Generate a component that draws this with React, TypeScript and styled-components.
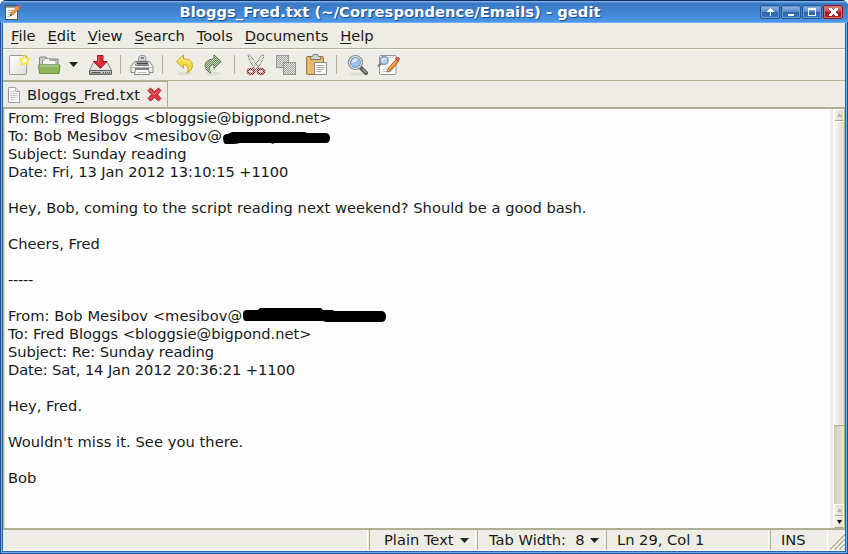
import React from "react";
import styled, { createGlobalStyle } from "styled-components";

const Global = createGlobalStyle`
  body { margin: 0; background: #fff; overflow: hidden; }
  * { box-sizing: border-box; }
`;

const Window = styled.div`
  width: 848px;
  height: 554px;
  display: flex;
  flex-direction: column;
  overflow: hidden;
  border-radius: 6px 6px 0 0;
  background: #1c4f93;
  font: 14.667px/18px "DejaVu Sans", sans-serif;
  color: #1a1a1a;
  white-space: pre;
`;

const TitleBar = styled.header`
  height: 23px;
  flex: none;
  display: flex;
  align-items: center;
  padding: 0 5px 0 4px;
  border-top: 1px solid #12305c;
  border-bottom: 1px solid #2a5ea4;
  background: linear-gradient(#77aeea 0 1px, #3a78c4 2px, #3f82d0 10px, #4b96e6 20px);
`;

const Title = styled.h1`
  flex: 1;
  margin: 0;
  padding-right: 2px;
  text-align: center;
  font-size: 14.667px;
  line-height: 20px;
  letter-spacing: 0.06px;
  color: #fff;
  text-shadow: 1px 1px 1px #1d4780;
`;

const WindowButtons = styled.div`
  display: flex;
  gap: 1px;
`;

const WindowButton = styled.button<{ $close?: boolean }>`
  width: 20px;
  height: 14px;
  padding: 0;
  display: flex;
  justify-content: center;
  align-items: center;
  border: 1px solid ${(p) => (p.$close ? "#8c1a1e" : "#245592")};
  border-radius: 2px;
  background: ${(p) =>
    p.$close
      ? "linear-gradient(#cf8588, #bd5054 45%, #a3191e 50%, #b02529)"
      : "linear-gradient(#8fb4df, #5f90cc 45%, #2d65ab 50%, #3a75bd)"};
  box-shadow: inset 0 0 0 1px ${(p) => (p.$close ? "#cc7074" : "#6b9bd5")};
  svg { flex: none; }
`;

const Frame = styled.div`
  flex: 1;
  min-height: 0;
  display: flex;
  flex-direction: column;
  background: #eeede5;
  border: solid #2566b3;
  border-width: 0 1px 1px;
  margin: 0 2px 2px;
  box-shadow: 0 0 0 1px #6eb0fa;
`;

const MenuBar = styled.nav`
  height: 26px;
  flex: none;
  display: flex;
  gap: 11.9px;
  padding: 4px 8px 0;
  border-bottom: 1px solid #b0af93;
`;

const MenuItem = styled.span`
  line-height: 18px;
`;

const Mnemonic = styled.span`
  text-decoration: underline;
  text-decoration-thickness: 1px;
  text-underline-offset: 2px;
`;

const ToolBar = styled.div`
  height: 32px;
  flex: none;
  display: flex;
  align-items: center;
  padding: 0 0 1px 4px;
  border-top: 1px solid #fff;
  border-bottom: 1px solid #b0af93;
`;

const Tool = styled.button<{ $gap?: number }>`
  width: 24px;
  height: 24px;
  padding: 0;
  border: 0;
  background: none;
  margin-left: ${(p) => p.$gap ?? 0}px;
  svg { display: block; }
`;

const Separator = styled.i<{ $gap: number }>`
  width: 1px;
  height: 19px;
  margin-left: ${(p) => p.$gap}px;
  background: #b0af93;
`;

const TabStrip = styled.div`
  height: 28px;
  flex: none;
  display: flex;
  border-bottom: 2px solid #b0af93;
`;

const Tab = styled.div`
  width: 165px;
  display: flex;
  align-items: center;
  padding: 0 5px 0 4px;
  border: solid #b0af93;
  border-width: 1px 1px 0 0;
  svg { flex: none; }
`;

const TabLabel = styled.span`
  flex: 1;
  padding-left: 5px;
`;

const Editor = styled.main`
  flex: 1;
  min-height: 0;
  display: flex;
  border: solid #b0af93;
  border-width: 0 1px 2px 1px;
`;

const TextArea = styled.div`
  flex: 1;
  background: #fdfdfd;
  border-left: 1px solid #e4e2d2;
  padding-left: 3px;
`;

const Line = styled.div<{ $tracking: number }>`
  height: 18px;
  display: flex;
  letter-spacing: ${(p) => p.$tracking}px;
`;

const Redaction = styled.svg`
  display: block;
  flex: none;
  overflow: visible;
`;

const ScrollBar = styled.div`
  width: 14px;
  display: flex;
  flex-direction: column;
  padding-left: 4px;
  background: linear-gradient(90deg, #eeede5 0 3px, #fff 3px 4px, #d0cdbf 4px, #e6e4db);
`;

const Stepper = styled.div`
  height: 12px;
  flex: none;
  display: flex;
  align-items: center;
  justify-content: center;
  border: 1px solid #fff;
  border-bottom-color: #b0a890;
  background: linear-gradient(90deg, #f2f0e9, #dedbd0);
`;

const Thumb = styled.div`
  height: 305px;
  border-top: 1px solid #fff;
  border-bottom: 1px solid #b0a890;
  background: linear-gradient(90deg, #fafaf7, #dddacd);
`;

const Trough = styled.div`
  flex: 1;
`;

const StatusBar = styled.footer`
  height: 21px;
  flex: none;
  display: flex;
  border-bottom: 1px solid #fff;
`;

const StatusCell = styled.div<{ $width: number; $pad: number }>`
  width: ${(p) => p.$width}px;
  flex: none;
  display: flex;
  align-items: center;
  padding-left: ${(p) => p.$pad}px;
  border-left: 1px solid #b0af93;
  border-right: 1px solid #fff;
  margin-right: 1px;
`;

const StatusFill = styled.div`
  width: 365px;
  flex: none;
  border-right: 1px solid #fff;
  margin-right: 1px;
`;

const Down = ({ gap = 0 }: { gap?: number }) => (
  <svg width={9 + gap} height="5" viewBox={`${-gap} 0 ${9 + gap} 5`}>
    <path d="M0 0H9L4.5 5Z" fill="#222" />
  </svg>
);

const Pencil = () => (
  <g>
    <path d="M11 19l2-4.500 7-8 2.500 2-7 8.500z" fill="#f28c28" stroke="#8b4a12" strokeWidth=".8" />
    <path d="M13.500 15.500L20 8" stroke="#ffc477" />
    <path d="M11 19l1-3.500 2.300 2z" fill="#f6dfb4" stroke="#5a4330" strokeWidth=".5" />
    <path d="M19.500 6l1.200-1.500q1.500-.7 2.800 1l-1 2.200z" fill="#ef5960" stroke="#c8343b" strokeWidth=".8" />
  </g>
);

const DocIcon = () => (
  <g>
    <path d="M1.500.5h7l4 4v11h-11z" fill="#fafafa" stroke="#9c9e98" />
    <path d="M8.500.5v4h4" fill="#e1e1df" stroke="#b2b3ae" />
    <path d="M3.500 4.500h4M3.500 6.500h7M3.500 8.500h7M3.500 10.500h7M3.500 12.500h5" stroke="#c8c9c5" />
  </g>
);

const AppIcon = () => (
  <svg width="18" height="18" viewBox="0 0 18 18">
    <rect x="1.500" y="3" width="12" height="13.500" fill="#fafafa" stroke="#555" />
    <path d="M3 2v3M5 2v3M7 2v3M9 2v3M11 2v3" stroke="#4d4d4d" />
    <path d="M3.500 7.500h7M3.500 9.500h6M3.500 11.500h4M3.500 13.500h3" stroke="#bbb" />
    <path d="M6 13l1.500-4 6.500-6 2 2-6.500 6.500z" fill="#f6943a" stroke="#a05c20" strokeWidth=".5" />
    <path d="M13.500 2.500l2-1 1.500 1.200-1 2z" fill="#ec5360" />
    <path d="M6 13l.7-2 1.300 1.200z" fill="#222" />
  </svg>
);

const icons: Record<string, React.ReactNode> = {
  new: (
    <>
      <defs>
        <linearGradient id="paper" x2="1" y2="1"><stop stopColor="#fff" /><stop offset="1" stopColor="#deded9" /></linearGradient>
      </defs>
      <rect x="2.500" y="2.500" width="17" height="19" rx="1" fill="url(#paper)" stroke="#979994" />
      <path d="M17.500 2l1.500 3.300 3.500.5-2.500 2.500.5 3.500-3-1.700-3.200 1.700.7-3.500L12.500 6l3.500-.7z" fill="#fffdee" stroke="#f3e13a" strokeWidth="1.500" strokeLinejoin="round" />
    </>
  ),
  open: (
    <>
      <path d="M2.500 17V5q0-1 1-1H9l1.500 2h10.500v11z" fill="#c9cac5" stroke="#82857d" />
      <path d="M5.500 12V8l2.500-2.500h4l1 2h6V12z" fill="#fafafa" stroke="#999b94" />
      <path d="M1.500 12h21.500l-1 8.500H2.500z" fill="#8db65a" stroke="#668f3f" />
      <path d="M2.500 13h19.500" stroke="#c4dda5" />
    </>
  ),
  save: (
    <>
      <path d="M5.500 9.500h14l4 8v4H1.500v-4z" fill="#e6e7e4" stroke="#858783" />
      <path d="M1.500 17.500h22v3.500h-22z" fill="#c3c5c1" stroke="#5b5d59" />
      <path d="M3.500 19.500h9M15 19.500h1M17 19.500h1M19 19.500h1M21 19.500h1" stroke="#555" />
      <path d="M9.500 2.500H15V8.500h4L12.300 15.500 5.500 8.500h4z" fill="#dc2a30" stroke="#9b181d" />
      <path d="M10.500 3.500v6" stroke="#ee6569" />
    </>
  ),
  print: (
    <>
      <path d="M8.500 8V5l1.500-2.500h4.500L16 5v3z" fill="#d8d9d6" stroke="#999b97" />
      <path d="M10.500 5h3.500" stroke="#6b6d69" strokeWidth="1.500" />
      <path d="M4.500 8.500h15l3.500 5v6H1v-6z" fill="#f0f0ee" stroke="#8b8d88" />
      <path d="M6.500 8.500h11l1 4h-13z" fill="#e1e3e2" stroke="#777b7d" />
      <path d="M7 10.500h10.500" stroke="#3e4854" strokeWidth="2.200" />
      <path d="M2 14.500h20" stroke="#b5b7b3" />
      <path d="M5 16h14" stroke="#4d504d" strokeWidth="1.500" />
      <path d="M5.500 16.500h13l1 5h-15z" fill="#fafafa" stroke="#858782" />
      <path d="M7.500 19.500h9" stroke="#bbb" />
    </>
  ),
  undo: (
    <>
      <ellipse cx="12" cy="20.500" rx="8" ry="1.800" fill="#deddd3" />
      <path d="M3.500 8.500l7-6.500v4q9-.5 9 7 0 4-5.500 7 2-4 .5-6.500-1-2-4-2v3.800z" fill="#f7dd45" stroke="#c9a818" strokeLinejoin="round" />
      <path d="M5 8.500l4.500-4v2.700q6 0 8 3" fill="none" stroke="#fff2a2" />
    </>
  ),
  redo: (
    <>
      <ellipse cx="12" cy="20.500" rx="8" ry="1.800" fill="#deddd3" />
      <path d="M20 8.500l-7-6.500v4q-9 .5-9 7 0 4 5.500 7-2-4-.5-6.500 1-2 4-2v3.800z" fill="#658a4e" stroke="#486340" />
      <path d="M20 8.500l-7-6.500v4q-9 .5-9 7 0 4 5.500 7-2-4-.5-6.500 1-2 4-2v3.800z" fill="url(#mesh)" />
    </>
  ),
  cut: (
    <>
      <path d="M4 2l2 0 9 13-2.500 2Q5 9 4 2zM20 2l-2 0-9 13 2.500 2Q19 9 20 2z" fill="#dededc" stroke="#6c6e6b" />
      <ellipse cx="7" cy="18.500" rx="3.300" ry="2.600" fill="none" stroke="#8e1927" strokeWidth="2.500" />
      <ellipse cx="17" cy="18.500" rx="3.300" ry="2.600" fill="none" stroke="#8e1927" strokeWidth="2.500" />
      <path d="M2 1h20v22H2z" fill="url(#mesh)" />
    </>
  ),
  copy: (
    <>
      <rect x="2.500" y="2.500" width="12" height="12" fill="#e8e8e5" stroke="#a0a19d" />
      <rect x="9.500" y="9.500" width="12" height="12" fill="#e8e8e5" stroke="#989995" />
      <path d="M2 2h13v7h7v13H9v-7H2z" fill="url(#meshGrey)" />
    </>
  ),
  paste: (
    <>
      <rect x="2.500" y="3.500" width="17" height="18" rx="1" fill="#ddab5e" stroke="#a9762f" />
      <rect x="4.500" y="5.500" width="13" height="14" fill="#e4b971" stroke="#e9c486" />
      <path d="M6.500 6.500v-3h2l1-2h4l1 2h2v3z" fill="#d3d5d0" stroke="#747670" />
      <path d="M10.500 9.500h12v12h-12z" fill="#fafafa" stroke="#898b85" />
      <path d="M12.500 12.500h8M12.500 14.500h8M12.500 16.500h7M12.500 18.500h5" stroke="#a7a9a5" />
    </>
  ),
  find: (
    <>
      <ellipse cx="12" cy="21" rx="9" ry="1.500" fill="#deddd5" />
      <path d="M14.500 14.500l5.500 5.500" stroke="#555854" strokeWidth="4" strokeLinecap="round" />
      <path d="M16.500 16l3.500 3.700" stroke="#a5a7a3" strokeWidth="1.500" />
      <circle cx="9.500" cy="9.500" r="6.500" fill="#91b8e8" stroke="#858886" strokeWidth="2.200" />
      <circle cx="9.500" cy="9.500" r="5.800" fill="#9dc1ef" stroke="#f2f3f2" strokeWidth="1.200" />
      <circle cx="9.500" cy="9.500" r="5" fill="none" stroke="#567fbd" strokeWidth=".8" />
      <path d="M5.500 10q1-5.500 6.500-4.500-1 3.500-6.500 4.500z" fill="#dceafa" />
    </>
  ),
  replace: (
    <>
      <rect x="3.500" y="2.500" width="16.500" height="19" rx="1" fill="#fafafa" stroke="#92948f" />
      <path d="M5.500 4.500h12M6.500 16.500h4M6.500 18.500h10" stroke="#ccc" />
      <path d="M5.500 10L2 13.500" stroke="#777a77" strokeWidth="2.200" />
      <circle cx="8" cy="7.500" r="4" fill="#b9d3f1" stroke="#7f93a5" strokeWidth="1.400" />
      <path d="M5.500 7.500q1-3 4-2.500-.5 2.500-4 2.500z" fill="#e8f1fa" />
      <Pencil />
    </>
  ),
};

const Glyph = ({ name }: { name: string }) => (
  <svg width="24" height="24" viewBox="0 0 24 24">
    <defs>
      <pattern id="mesh" width="2" height="2" patternUnits="userSpaceOnUse">
        <path d="M0 0h1v1H0zM1 1h1v1H1z" fill="#eeede5" opacity=".75" shapeRendering="crispEdges" />
      </pattern>
      <pattern id="meshGrey" width="2" height="2" patternUnits="userSpaceOnUse">
        <path d="M0 0h1v1H0zM1 1h1v1H1z" fill="#8f908c" opacity=".8" shapeRendering="crispEdges" />
      </pattern>
    </defs>
    {icons[name]}
  </svg>
);

const menus = ["File", "Edit", "View", "Search", "Tools", "Documents", "Help"];

const windowGlyphs = [
  "M5 1h1v1h1v1h1v1h1v1H6v4H5V5H2V4h1V3h1V2h1z",
  "M2 7h6v2H2z",
  "M1 1h8v8H1zM2 3v5h6V3z",
  "M1 1h3v1h1v1h1V2h1V1h3v2H9v1H8v2h1v1h1v2H7V8H6V7H5v1H4v1H1V7h1V6h1V4H2V3H1z",
];

const firstMark = "M1 11q0-4 5-4l4-2h73l2 1h18q5 0 5 5t-4 5H52l-1 1-2-1H18q-3 1-7 1H3q-2-2-2-6z";
const secondMark = "M1 7q0-4 4-4h11l2-2h61l2 2h10l1 1h47q5 0 5 5.500t-5 5.500H84l-3-1H4q-3 0-3-5z";

type TextLine = { text: string; tracking?: number; mark?: string };

const lines: TextLine[] = [
  { text: "From: Fred Bloggs <bloggsie@bigpond.net>", tracking: -0.04 },
  { text: "To: Bob Mesibov <mesibov@", tracking: 0.08, mark: firstMark },
  { text: "Subject: Sunday reading", tracking: -0.05 },
  { text: "Date: Fri, 13 Jan 2012 13:10:15 +1100", tracking: -0.1 },
  { text: "" },
  { text: "Hey, Bob, coming to the script reading next weekend? Should be a good bash.", tracking: 0.035 },
  { text: "" },
  { text: "Cheers, Fred" },
  { text: "" },
  { text: "-----", tracking: -0.28 },
  { text: "" },
  { text: "From: Bob Mesibov <mesibov@", tracking: 0.05, mark: secondMark },
  { text: "To: Fred Bloggs <bloggsie@bigpond.net>", tracking: -0.02 },
  { text: "Subject: Re: Sunday reading", tracking: -0.06 },
  { text: "Date: Sat, 14 Jan 2012 20:36:21 +1100", tracking: -0.1 },
  { text: "" },
  { text: "Hey, Fred." },
  { text: "" },
  { text: "Wouldn't miss it. See you there.", tracking: 0.06 },
  { text: "" },
  { text: "Bob" },
];

const StepArrow = ({ down, dark }: { down?: boolean; dark?: boolean }) => (
  <svg width="5" height="4" viewBox="0 0 5 4">
    <path d={down ? "M0 0h5L2.500 4z" : "M0 4h5L2.500 0z"} fill={dark ? "#111" : "#b7b5a9"} />
  </svg>
);

const Grip = () => (
  <svg width="17" height="20" viewBox="0 0 17 20">
    <path d="M1 20L17 4M6 20L17 9M11 20l6-6M16 20l1-1" stroke="#b0af93" strokeWidth="1.600" />
    <path d="M-1 20L17 2M4 20L17 7M9 20l8-8M14 20l3-3" stroke="#fff" />
  </svg>
);

export default function App() {
  return (
    <Window>
      <Global />
      <TitleBar>
        <AppIcon />
        <Title>Bloggs_Fred.txt (~/Correspondence/Emails) - gedit</Title>
        <WindowButtons>
          {windowGlyphs.map((d, i) => (
            <WindowButton key={d} $close={i === 3}>
              <svg width="11" height="10" viewBox="0 0 11 10" shapeRendering="crispEdges">
                <path d={d} fill="#fff" fillRule="evenodd" />
              </svg>
            </WindowButton>
          ))}
        </WindowButtons>
      </TitleBar>
      <Frame>
        <MenuBar>
          {menus.map((m) => (
            <MenuItem key={m}>
              <Mnemonic>{m[0]}</Mnemonic>
              {m.slice(1)}
            </MenuItem>
          ))}
        </MenuBar>
        <ToolBar>
          <Tool><Glyph name="new" /></Tool>
          <Tool $gap={6}><Glyph name="open" /></Tool>
          <Down gap={8} />
          <Tool $gap={10}><Glyph name="save" /></Tool>
          <Separator $gap={8} />
          <Tool $gap={9}><Glyph name="print" /></Tool>
          <Separator $gap={8} />
          <Tool $gap={10}><Glyph name="undo" /></Tool>
          <Tool $gap={4}><Glyph name="redo" /></Tool>
          <Separator $gap={9} />
          <Tool $gap={9}><Glyph name="cut" /></Tool>
          <Tool $gap={6}><Glyph name="copy" /></Tool>
          <Tool $gap={6}><Glyph name="paste" /></Tool>
          <Separator $gap={8} />
          <Tool $gap={9}><Glyph name="find" /></Tool>
          <Tool $gap={6}><Glyph name="replace" /></Tool>
        </ToolBar>
        <TabStrip>
          <Tab>
            <svg width="15" height="16" viewBox="0 0 15 16"><DocIcon /></svg>
            <TabLabel>Bloggs_Fred.txt</TabLabel>
            <svg width="15" height="15" viewBox="0 0 15 15">
              <path d="M1 3.500L3.500 1l4 3.500 4-3.500L14 3.500l-3.500 4 3.500 4-2.500 2.500-4-3.500-4 3.500L1 11.500l3.500-4z" fill="#d93840" stroke="#b92b32" strokeLinejoin="round" />
              <path d="M3 3.500l4.500 4 4.500-4" fill="none" stroke="#ed8084" />
            </svg>
          </Tab>
        </TabStrip>
        <Editor>
          <TextArea>
            {lines.map((l, i) => (
              <Line key={i} $tracking={l.tracking ?? 0}>
                {l.text}
                {l.mark && (
                  <Redaction width="145" height="18" viewBox="0 0 145 18">
                    <path d={l.mark} fill="#000" />
                  </Redaction>
                )}
              </Line>
            ))}
          </TextArea>
          <ScrollBar>
            <Stepper><StepArrow /></Stepper>
            <Thumb />
            <Trough />
            <Stepper><StepArrow /></Stepper>
            <Stepper><StepArrow down dark /></Stepper>
          </ScrollBar>
        </Editor>
        <StatusBar>
          <StatusFill />
          <StatusCell $width={107} $pad={14}>Plain Text<Down gap={6} /></StatusCell>
          <StatusCell $width={128} $pad={11}>Tab Width:  8<Down gap={5} /></StatusCell>
          <StatusCell $width={163} $pad={10}>Ln 29, Col 1</StatusCell>
          <StatusCell $width={58} $pad={10}>INS</StatusCell>
          <Grip />
        </StatusBar>
      </Frame>
    </Window>
  );
}
